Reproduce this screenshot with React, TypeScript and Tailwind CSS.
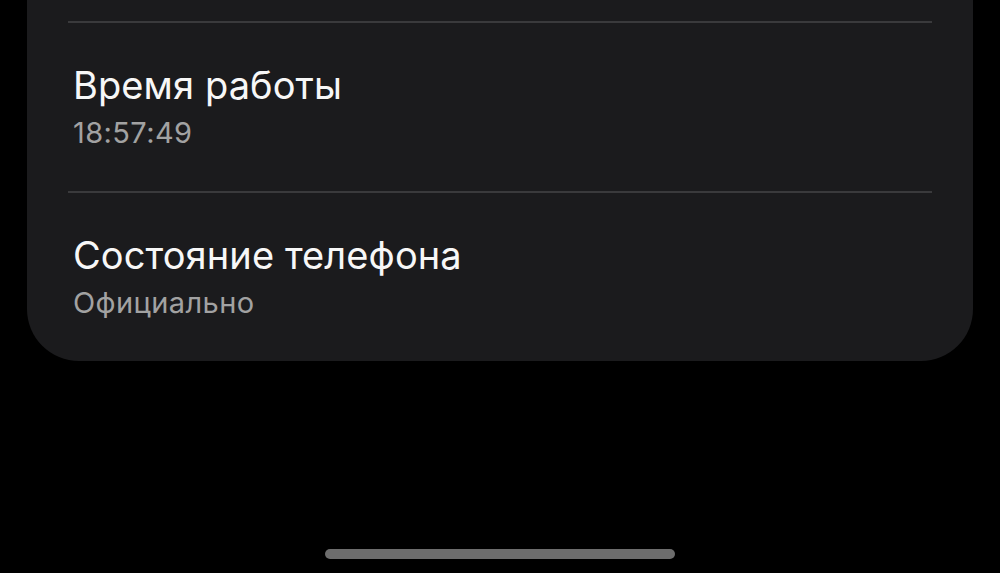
const rows = [
  { title: 'Время работы', value: '18:57:49' },
  { title: 'Состояние телефона', value: 'Официально' },
];

export default function App() {
  return (
    <main
      className="flex h-[573px] w-[1000px] flex-col bg-black"
      style={{ fontFamily: 'Inter, "Noto Sans", sans-serif' }}
    >
      <section className="mx-[27px] rounded-b-[52px] bg-[#1b1b1d] px-[41px] pt-[21px]">
        {rows.map((row) => (
          <div key={row.title}>
            <div className="h-[2px] bg-[#3a3a3c]" />
            <div className="pb-[41px] pl-[5px] pt-[40px]">
              <p className="text-[38px] leading-[44px] tracking-[0.1px] text-[#f7f7f7]">{row.title}</p>
              <p className="mt-[9px] text-[29px] leading-[34px] tracking-[0.4px] text-[#a2a2a2]">{row.value}</p>
            </div>
          </div>
        ))}
      </section>
      <div className="mt-auto mb-[14px] flex justify-center">
        <div className="h-[10px] w-[350px] rounded-full bg-[#6d6d6d]" />
      </div>
    </main>
  );
}
